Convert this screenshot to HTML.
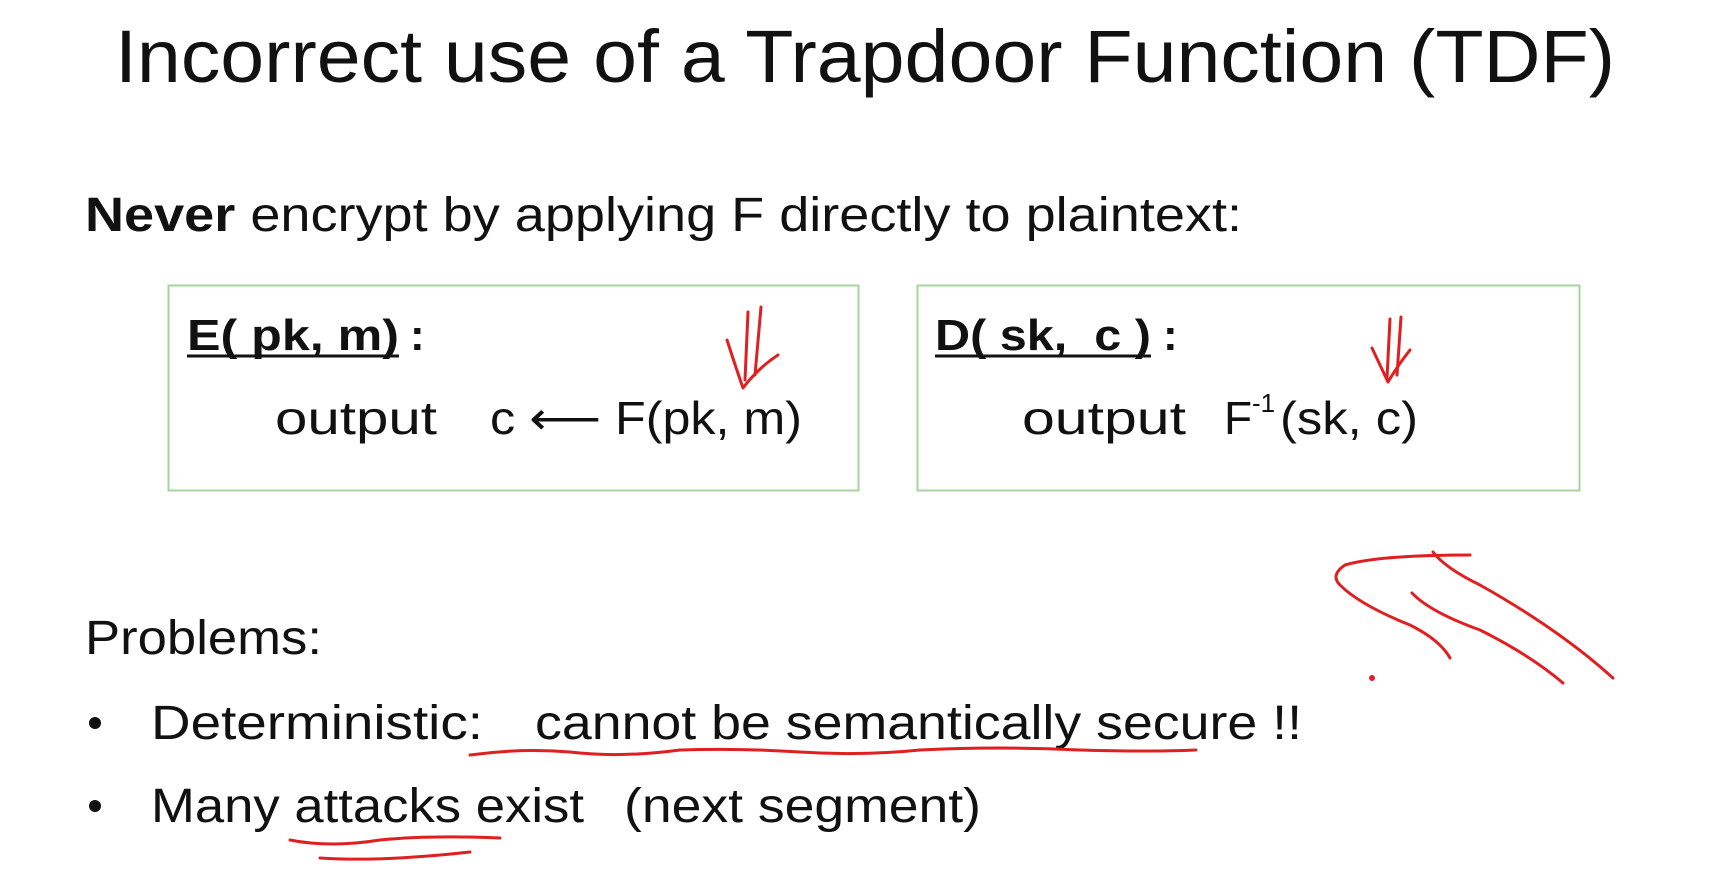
<!DOCTYPE html>
<html><head><meta charset="utf-8"><style>
html,body{margin:0;padding:0;background:#fff;}
svg{display:block}
text{font-family:"Liberation Sans",sans-serif;fill:#111;white-space:pre;}
</style></head><body>
<svg width="1716" height="878" viewBox="0 0 1716 878" xmlns="http://www.w3.org/2000/svg" xml:space="preserve">
<rect width="1716" height="878" fill="#fff"/>
<text x="115" y="82" font-size="74" textLength="1500" lengthAdjust="spacingAndGlyphs">Incorrect use of a Trapdoor Function (TDF)</text>
<text x="85" y="231" font-size="48" textLength="1157" lengthAdjust="spacingAndGlyphs"><tspan font-weight="bold">Never</tspan> encrypt by applying F directly to plaintext:</text>
<rect x="168.5" y="285.5" width="690" height="205" fill="none" stroke="#a8d4a0" stroke-width="2"/>
<rect x="917.5" y="285.5" width="662" height="205" fill="none" stroke="#a8d4a0" stroke-width="2"/>
<text x="187" y="350" font-size="44" font-weight="bold" textLength="212" lengthAdjust="spacingAndGlyphs">E( pk, m)</text>
<line x1="187" y1="356" x2="399" y2="356" stroke="#111" stroke-width="3"/>
<text x="410" y="350" font-size="44" font-weight="bold">:</text>
<text x="275" y="434" font-size="46" textLength="162" lengthAdjust="spacingAndGlyphs">output</text>
<text x="490" y="434" font-size="46" textLength="312" lengthAdjust="spacingAndGlyphs">c ⟵ F(pk, m)</text>
<text x="935" y="350" font-size="44" font-weight="bold" textLength="216" lengthAdjust="spacingAndGlyphs">D( sk,  c )</text>
<line x1="935" y1="356" x2="1151" y2="356" stroke="#111" stroke-width="3"/>
<text x="1163" y="350" font-size="44" font-weight="bold">:</text>
<text x="1022" y="434" font-size="46" textLength="164" lengthAdjust="spacingAndGlyphs">output</text>
<text x="1224" y="434" font-size="46">F</text>
<text x="1252" y="412" font-size="26">-1</text>
<text x="1280" y="434" font-size="46" textLength="138" lengthAdjust="spacingAndGlyphs">(sk, c)</text>
<text x="85" y="654" font-size="48" textLength="237" lengthAdjust="spacingAndGlyphs">Problems:</text>
<circle cx="95" cy="723" r="6" fill="#111"/>
<text x="151" y="739" font-size="48" textLength="332" lengthAdjust="spacingAndGlyphs">Deterministic:</text>
<text x="535" y="739" font-size="48" textLength="767" lengthAdjust="spacingAndGlyphs">cannot be semantically secure !!</text>
<circle cx="95" cy="806" r="6" fill="#111"/>
<text x="151" y="822" font-size="48" textLength="433" lengthAdjust="spacingAndGlyphs">Many attacks exist</text>
<text x="624" y="822" font-size="48" textLength="357" lengthAdjust="spacingAndGlyphs">(next segment)</text>
<g fill="none" stroke="#e02020" stroke-width="3" stroke-linecap="round" stroke-linejoin="round">
<path d="M748 312 L745 380 M761 307 L755 375 M727 340 Q735 365 743 388 Q758 368 778 355"/>
<path d="M1390 319 L1387 378 M1401 317 L1397 375 M1372 348 Q1380 365 1388 382 Q1398 365 1410 350"/>
<path d="M470 755 Q520 748 570 752 Q620 758 680 750 Q740 748 800 752 Q860 756 920 750 Q1000 746 1080 750 Q1150 752 1196 750"/>
<path d="M290 840 Q330 848 380 840 Q430 835 500 838 M320 858 Q380 862 470 852"/>
<path d="M1470 555 Q1380 555 1345 565 Q1330 575 1340 585 Q1360 605 1410 625 Q1440 640 1450 658"/>
<path d="M1412 593 Q1430 612 1480 630 Q1530 655 1563 683"/>
<path d="M1433 552 Q1445 568 1480 585 Q1560 630 1613 678"/>
<circle cx="1372" cy="678" r="1.5"/>
</g>
</svg>
</body></html>
